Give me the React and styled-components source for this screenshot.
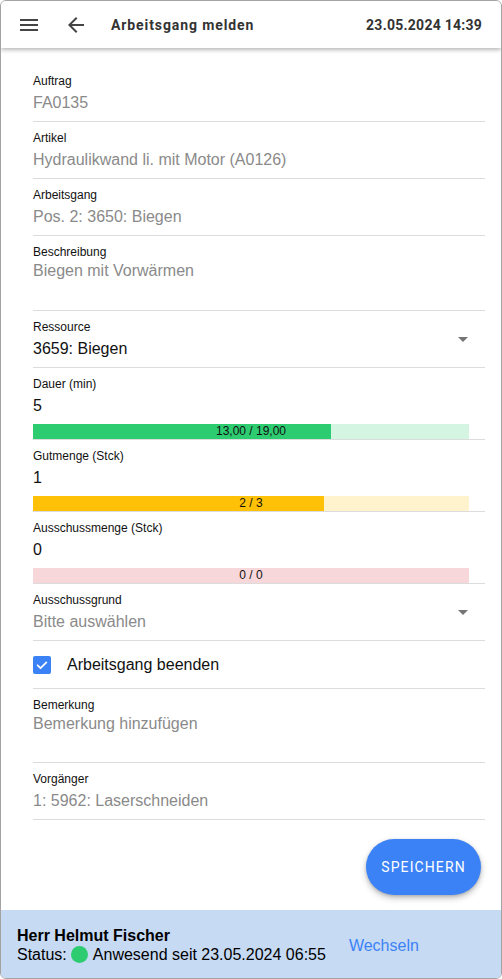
import React from "react";
import styled, { createGlobalStyle } from "styled-components";

const Global = createGlobalStyle`
  html, body { margin: 0; padding: 0; background: #ffffff; }
  body { font-family: "Liberation Sans", Arial, sans-serif; }
  * { box-sizing: border-box; }
`;

const Frame = styled.div`
  width: 502px;
  height: 979px;
  border: 1px solid #a3a3a3;
  border-radius: 6px;
  overflow: hidden;
  display: flex;
  flex-direction: column;
  background: #fff;
`;

const Header = styled.header`
  height: 47px;
  flex: 0 0 47px;
  display: flex;
  align-items: center;
  padding: 1px 19px 0 16px;
  background: #fff;
  box-shadow: 0 2px 4px rgba(0, 0, 0, 0.28);
  position: relative;
  z-index: 1;
  font-family: Roboto, "Liberation Sans", sans-serif;
  color: #333;
`;

const IconButton = styled.span`
  width: 24px;
  height: 24px;
  display: flex;
  margin-right: 23px;
  color: #444;
`;

const Title = styled.div`
  font-size: 14px;
  font-weight: 700;
  letter-spacing: 0.9px;
  flex: 1;
`;

const DateText = styled.div`
  font-size: 14px;
  font-weight: 700;
  letter-spacing: 0.25px;
`;

const Content = styled.main`
  flex: 1;
  padding: 17px 16px 0 32px;
  display: flex;
  flex-direction: column;
`;

const Field = styled.div`
  display: flex;
  align-items: center;
  padding: 9px 0 ${(p) => (p.$bar ? "0" : "9px")} 0;
  border-bottom: 1px solid #dcdcdc;
`;

const FieldBody = styled.div`
  flex: 1;
  display: flex;
  flex-direction: column;
`;

const Label = styled.div`
  font-size: 12px;
  line-height: 14px;
  color: #111;
`;

const Value = styled.div`
  font-size: 16px;
  line-height: 18px;
  margin-top: ${(p) => (p.$area ? "3px" : "6px")};
  height: ${(p) => (p.$area ? `${p.$area}px` : "18px")};
  color: ${(p) => (p.$dark ? "#111" : "#8a8a8a")};
`;

const Bar = styled.div`
  position: relative;
  margin: 9px 16px 0 0;
  height: 15px;
  background: ${(p) => p.$track};
  display: flex;
`;

const BarFill = styled.div`
  height: 100%;
  background: ${(p) => p.$fill};
`;

const BarText = styled.span`
  position: absolute;
  inset: 0;
  text-align: center;
  font-size: 12px;
  line-height: 15px;
  color: #111;
`;

const Arrow = styled.span`
  width: 24px;
  height: 24px;
  margin-right: 10px;
  display: flex;
  color: #757575;
`;

const CheckRow = styled.label`
  height: 48px;
  display: flex;
  align-items: center;
  padding-top: 1px;
  border-bottom: 1px solid #dcdcdc;
  font-size: 16px;
  color: #111;
`;

const CheckBox = styled.span`
  width: 18px;
  height: 18px;
  border-radius: 2px;
  background: #3b82f6;
  display: flex;
  align-items: center;
  justify-content: center;
  margin-right: 16px;
`;

const Actions = styled.div`
  display: flex;
  justify-content: flex-end;
  padding: 19px 4px 0 0;
`;

const SaveButton = styled.button`
  width: 115px;
  height: 56px;
  border: none;
  border-radius: 28px;
  background: #3b82f6;
  color: #fff;
  font-family: Roboto, "Liberation Sans", sans-serif;
  font-size: 14px;
  font-weight: 400;
  letter-spacing: 1.1px;
  box-shadow: 0 3px 6px rgba(0, 0, 0, 0.25), 0 1px 3px rgba(0, 0, 0, 0.15);
  cursor: pointer;
`;

const Footer = styled.footer`
  height: 68px;
  flex: 0 0 68px;
  background: #c6daf3;
  display: flex;
  align-items: center;
  padding: 2px 16px 0;
  font-size: 16px;
  line-height: 19px;
  color: #000;
`;

const Person = styled.div`
  display: flex;
  flex-direction: column;
`;

const Name = styled.div`
  font-weight: 700;
`;

const Status = styled.div`
  display: flex;
  align-items: center;
`;

const Dot = styled.span`
  width: 17px;
  height: 17px;
  border-radius: 50%;
  background: #2ecc71;
  margin: 0 5px 0 4px;
`;

const SwitchLink = styled.a`
  margin-left: 23px;
  color: #3b82f6;
  text-decoration: none;
  cursor: pointer;
`;

const MenuIcon = () => (
  <svg width="24" height="24" viewBox="0 0 24 24" fill="currentColor">
    <path d="M3 18h18v-2H3v2zm0-5h18v-2H3v2zm0-7v2h18V6H3z" />
  </svg>
);

const BackIcon = () => (
  <svg width="24" height="24" viewBox="0 0 24 24" fill="currentColor">
    <path d="M20 11H7.83l5.59-5.59L12 4l-8 8 8 8 1.41-1.41L7.83 13H20v-2z" />
  </svg>
);

const DropIcon = () => (
  <svg width="24" height="24" viewBox="0 0 24 24" fill="currentColor">
    <path d="M7 10l5 5 5-5z" />
  </svg>
);

const ReadField = ({ label, value, area, dark }) => (
  <Field>
    <FieldBody>
      <Label>{label}</Label>
      <Value $area={area} $dark={dark}>{value}</Value>
    </FieldBody>
  </Field>
);

const SelectField = ({ label, value, dark }) => (
  <Field>
    <FieldBody>
      <Label>{label}</Label>
      <Value $dark={dark}>{value}</Value>
    </FieldBody>
    <Arrow><DropIcon /></Arrow>
  </Field>
);

const BarField = ({ label, value, pct, fill, track, text }) => (
  <Field $bar>
    <FieldBody>
      <Label>{label}</Label>
      <Value $dark>{value}</Value>
      <Bar $track={track}>
        <BarFill $fill={fill} style={{ width: `${pct}%` }} />
        <BarText>{text}</BarText>
      </Bar>
    </FieldBody>
  </Field>
);

export default function App() {
  return (
    <>
      <Global />
      <Frame>
        <Header>
          <IconButton><MenuIcon /></IconButton>
          <IconButton><BackIcon /></IconButton>
          <Title>Arbeitsgang melden</Title>
          <DateText>23.05.2024 14:39</DateText>
        </Header>
        <Content>
          <ReadField label="Auftrag" value="FA0135" />
          <ReadField label="Artikel" value="Hydraulikwand li. mit Motor (A0126)" />
          <ReadField label="Arbeitsgang" value="Pos. 2: 3650: Biegen" />
          <ReadField label="Beschreibung" value="Biegen mit Vorwärmen" area={39} />
          <SelectField label="Ressource" value="3659: Biegen" dark />
          <BarField label="Dauer (min)" value="5" pct={(13 / 19) * 100} fill="#2ecc71" track="#d4f5e2" text="13,00 / 19,00" />
          <BarField label="Gutmenge (Stck)" value="1" pct={(2 / 3) * 100} fill="#ffc107" track="#fff3cd" text="2 / 3" />
          <BarField label="Ausschussmenge (Stck)" value="0" pct={0} fill="#e74c3c" track="#f8d7da" text="0 / 0" />
          <SelectField label="Ausschussgrund" value="Bitte auswählen" />
          <CheckRow>
            <CheckBox>
              <svg width="14" height="14" viewBox="0 0 24 24" fill="none" stroke="#fff" strokeWidth="3" strokeLinecap="round" strokeLinejoin="round">
                <path d="M4.5 12.5l5 5 10-10" />
              </svg>
            </CheckBox>
            Arbeitsgang beenden
          </CheckRow>
          <ReadField label="Bemerkung" value="Bemerkung hinzufügen" area={38} />
          <ReadField label="Vorgänger" value="1: 5962: Laserschneiden" />
          <Actions>
            <SaveButton>SPEICHERN</SaveButton>
          </Actions>
        </Content>
        <Footer>
          <Person>
            <Name>Herr Helmut Fischer</Name>
            <Status>
              Status:<Dot />Anwesend seit 23.05.2024 06:55
            </Status>
          </Person>
          <SwitchLink>Wechseln</SwitchLink>
        </Footer>
      </Frame>
    </>
  );
}
